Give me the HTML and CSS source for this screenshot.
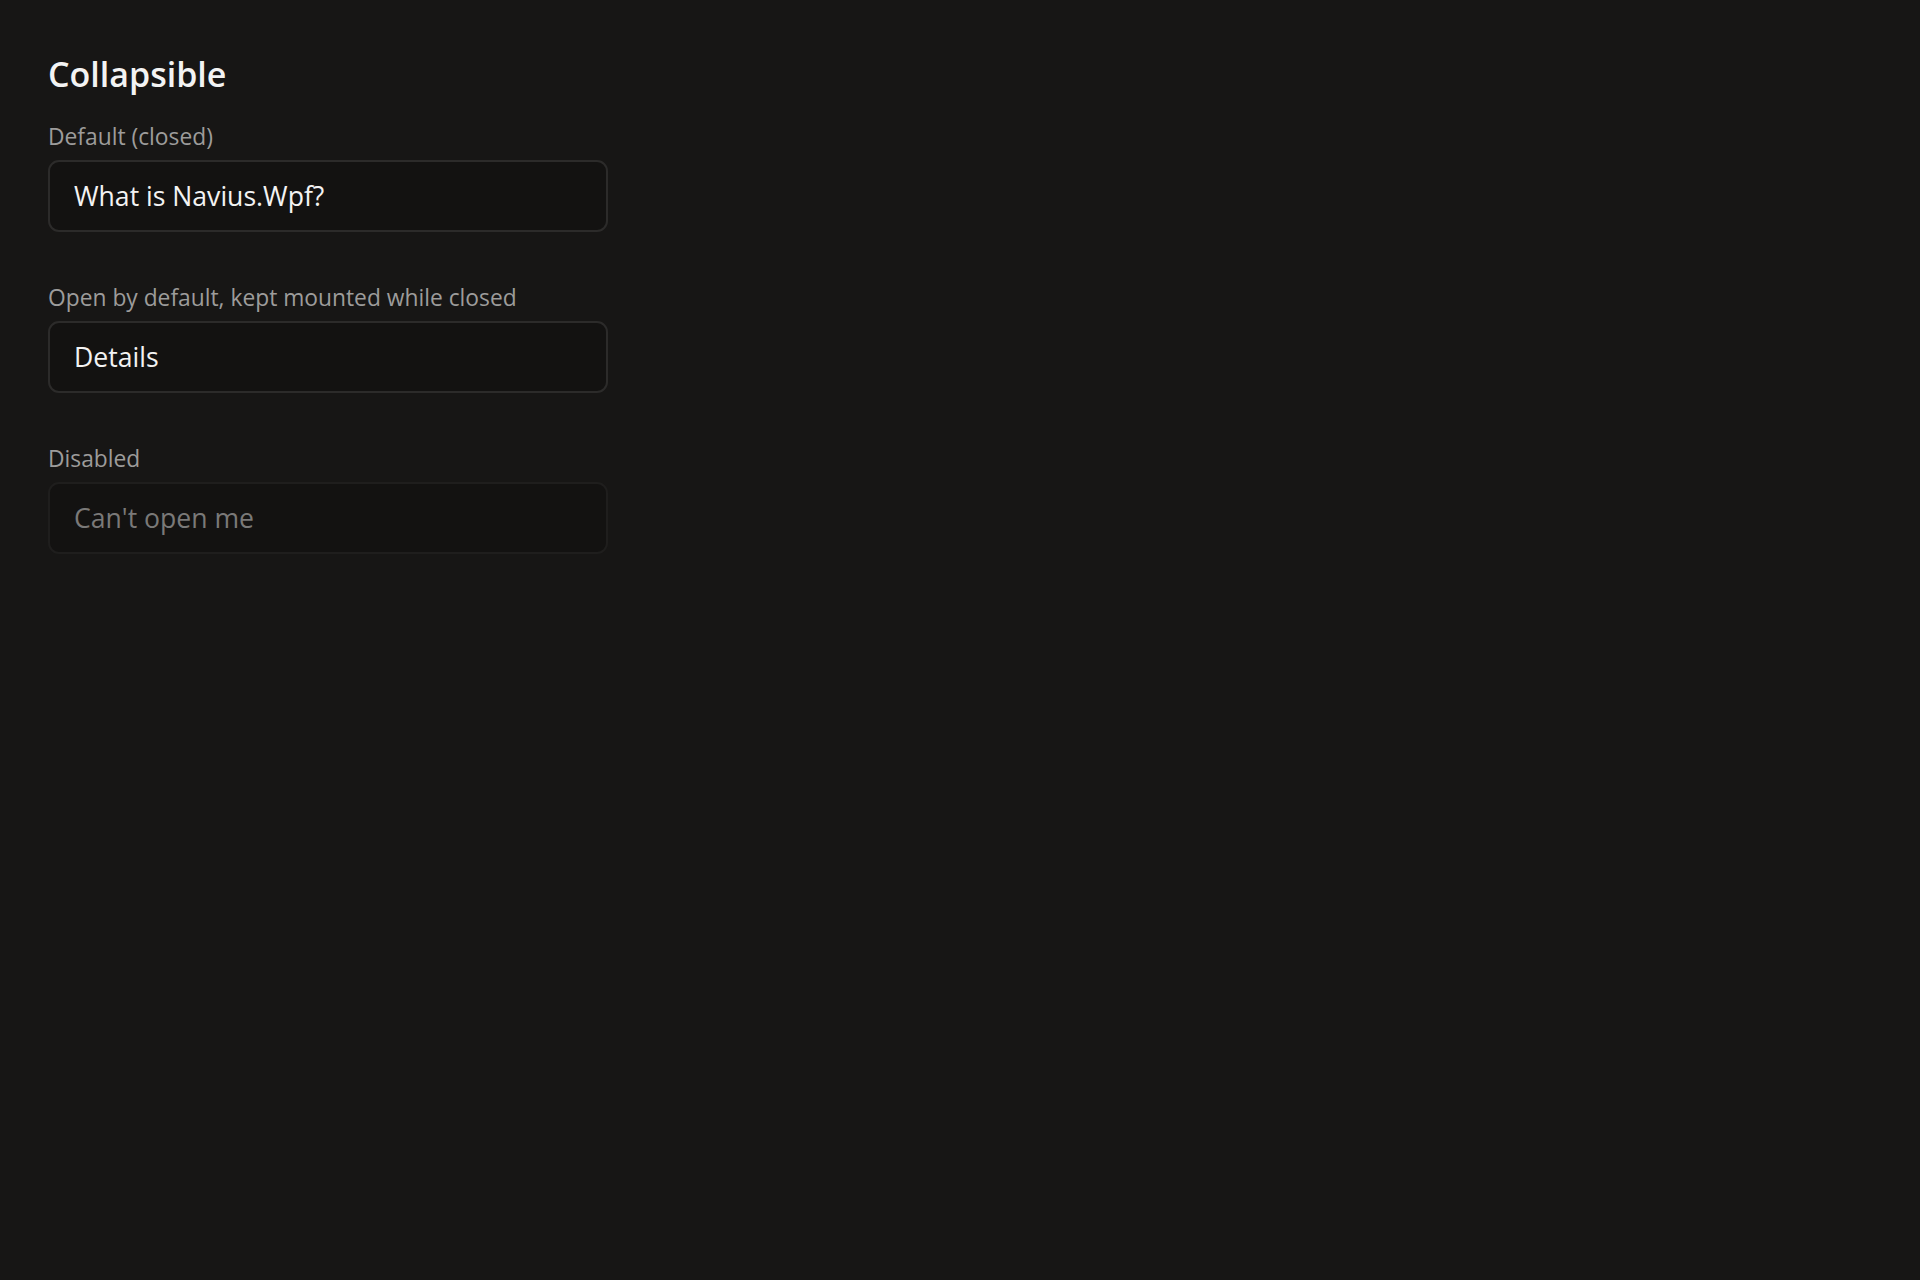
FILE: index.html
```html
<!DOCTYPE html>
<html lang="en">
<head>
  <meta charset="UTF-8" />
  <meta name="viewport" content="width=device-width, initial-scale=1.0" />
  <title>Collapsible</title>
  <link rel="stylesheet" href="styles.css">
</head>
<body>
  <div class="page">
    <h1 class="page-title">Collapsible</h1>

    <!-- Default (closed) -->
    <section class="demo">
      <div class="demo-label">Default (closed)</div>
      <div class="collapsible">
        <button class="collapsible-trigger" type="button">What is Navius.Wpf?</button>
      </div>
    </section>

    <!-- Open by default, kept mounted -->
    <section class="demo">
      <div class="demo-label">Open by default, kept mounted while closed</div>
      <div class="collapsible">
        <button class="collapsible-trigger" type="button">Details</button>
      </div>
    </section>

    <!-- Disabled -->
    <section class="demo">
      <div class="demo-label">Disabled</div>
      <div class="collapsible disabled">
        <button class="collapsible-trigger" type="button" disabled>Can't open me</button>
      </div>
    </section>
  </div>
</body>
</html>
```

FILE: styles.css
```css
body, html {
  height: 100%;
  margin: 0;
  background: #171615;
  font-family: "Open Sans", "Noto Sans", sans-serif;
}

.page {
  padding: 52px 48px;
  width: 560px;
}

.page-title {
  margin: 0 0 26px;
  font-size: 34px;
  font-weight: 600;
  line-height: 44px;
  color: #f3f3f3;
}

.demo {
  margin-bottom: 51px;
}

.demo-label {
  font-size: 22.8px;
  line-height: 30px;
  color: #9d9c9b;
  margin-bottom: 8px;
}

.collapsible {
  border: 2px solid #2c2b2a;
  border-radius: 11px;
  background: #131211;
}

.collapsible-trigger {
  display: block;
  width: 100%;
  height: 68px;
  padding: 0 24px;
  border: none;
  border-radius: 9px;
  background: transparent;
  text-align: left;
  font-family: inherit;
  font-size: 26.6px;
  color: #f3f3f3;
  cursor: pointer;
}

.collapsible.disabled {
  border-color: #1f1e1d;
}

.collapsible.disabled .collapsible-trigger {
  color: #7a7978;
  cursor: default;
}
```
